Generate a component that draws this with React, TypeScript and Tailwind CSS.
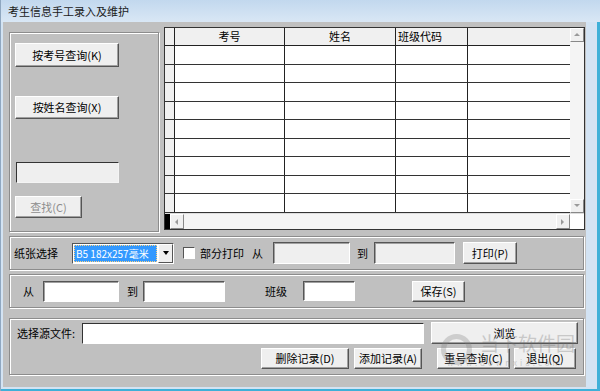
import React from 'react';

const font = { fontFamily: '"Noto Sans CJK SC", "Noto Sans", sans-serif' };

const Btn: React.FC<{ label: string; w: string; h?: string; disabled?: boolean }> = ({ label, w, h = 'h-[22px]', disabled }) => (
  <div
    className={`${w} ${h} shrink-0 flex items-center justify-center bg-[#efefef] border border-t-white border-l-white border-r-[#555] border-b-[#555] shadow-[inset_-1px_-1px_0_#a0a0a0] text-[11px] leading-none whitespace-nowrap ${
      disabled ? 'text-[#8d8d8d]' : 'text-black'
    }`}
  >
    {label}
  </div>
);

const Field: React.FC<{ w: string; h?: string; gray?: boolean }> = ({ w, h = 'h-[21px]', gray }) => (
  <div
    className={`${w} ${h} shrink-0 border border-t-[#555] border-l-[#555] border-r-white border-b-white shadow-[inset_1px_1px_0_#a0a0a0] ${
      gray ? 'bg-[#efefef]' : 'bg-white'
    }`}
  />
);

const Group: React.FC<{ className: string; children?: React.ReactNode }> = ({ className, children }) => (
  <div className={`border border-[#8c8c8c] shadow-[inset_1px_1px_0_#fff,1px_1px_0_#fff] ${className}`}>{children}</div>
);

const Arrow: React.FC<{ dir: 'up' | 'down' | 'left' | 'right' }> = ({ dir }) => {
  const pts = {
    up: '1,5 4,2 7,5',
    down: '1,2 4,5 7,2',
    left: '5,1 2,4 5,7',
    right: '2,1 5,4 2,7',
  }[dir];
  return (
    <svg width="8" height="8" viewBox="0 0 8 8">
      <polygon points={pts} fill="#9a9a9a" />
    </svg>
  );
};

const ScrollBtn: React.FC<{ dir: 'up' | 'down' | 'left' | 'right'; className?: string }> = ({ dir, className = '' }) => (
  <div className={`w-[14px] h-[14px] shrink-0 flex items-center justify-center bg-[#f0f0f0] border border-t-white border-l-white border-r-[#888] border-b-[#888] ${className}`}>
    <Arrow dir={dir} />
  </div>
);

const cols = [
  { w: 'w-[110px]', label: '考号', align: 'justify-center' },
  { w: 'w-[111px]', label: '姓名', align: 'justify-center' },
  { w: 'w-[72px]', label: '班级代码', align: 'justify-start pl-[2px]' },
  { w: 'flex-1', label: '', align: '' },
];

const Grid: React.FC = () => (
  <div className="w-[421px] h-[203px] ml-[5px] mt-[5px] border border-[#333] bg-white flex flex-col shrink-0">
    <div className="flex h-[185px]">
      <div className="flex-1 flex flex-col overflow-hidden">
        <div className="flex h-[18px] bg-[#f0f0f0] border-b border-[#222]">
          <div className="w-[10px] border-r border-[#222]" />
          {cols.map((c, i) => (
            <div key={i} className={`${c.w} flex items-center ${c.align} text-[11px] ${i < 3 ? 'border-r border-[#222]' : ''}`}>
              {c.label}
            </div>
          ))}
        </div>
        {Array.from({ length: 9 }).map((_, r) => (
          <div key={r} className="flex h-[18.5px] border-b border-[#333] shrink-0">
            <div className="w-[10px] bg-[#f0f0f0] border-r border-[#222]" />
            {cols.map((c, i) => (
              <div key={i} className={`${c.w} ${i < 3 ? 'border-r border-[#222]' : ''}`} />
            ))}
          </div>
        ))}
      </div>
      <div className="w-[14px] flex flex-col justify-between bg-[#f4f4f4]">
        <ScrollBtn dir="up" />
        <ScrollBtn dir="down" />
      </div>
    </div>
    <div className="flex h-[16px] border-t border-[#ddd]">
      <div className="w-[5px] bg-black" />
      <ScrollBtn dir="left" className="h-[15px]" />
      <div className="flex-1 bg-[#f4f4f4]" />
      <ScrollBtn dir="right" className="h-[15px]" />
      <div className="w-[14px] bg-white" />
    </div>
  </div>
);

export default function App() {
  return (
    <div className="w-[600px] h-[391px] bg-[#d3e3f3] flex flex-col overflow-hidden relative border-l border-[#8fa7c0]" style={font}>
      <div className="h-[22px] shrink-0 bg-gradient-to-b from-[#c2d8ee] to-[#d9e7f5] flex items-center pl-[7px] text-[11px] text-[#1a1a1a]">
        考生信息手工录入及维护
      </div>
      <div className="flex-1 flex">
        <div className="w-[583px] ml-[2px] mb-[2px] bg-[#c0c0c0] flex flex-col text-[11px] text-black">
          {/* top */}
          <div className="flex items-start">
            <Group className="ml-[6px] mt-[10px] w-[150px] h-[200px] flex flex-col pl-[5px] shrink-0">
              <div className="mt-[10px]">
                <Btn label="按考号查询(K)" w="w-[104px]" h="h-[24px]" />
              </div>
              <div className="mt-[29px]">
                <Btn label="按姓名查询(X)" w="w-[104px]" h="h-[23px]" />
              </div>
              <div className="mt-[43px] ml-[1px]">
                <div className="w-[103px] h-[21px] border border-[#333] border-r-[#f4f4f4] border-b-[#f4f4f4] bg-[#efefef]" />
              </div>
              <div className="mt-[13px]">
                <Btn label="查找(C)" w="w-[67px]" disabled />
              </div>
            </Group>
            <Grid />
          </div>

          {/* paper row */}
          <Group className="ml-[6px] mt-[4px] w-[575px] h-[34px] flex items-center shrink-0">
            <span className="ml-[4px] w-[58px]">纸张选择</span>
            <div className="w-[102px] h-[21px] shrink-0 flex border border-t-[#555] border-l-[#555] border-r-white border-b-white bg-white">
              <div className="flex-1 m-[1px] bg-[#3399ff] text-white text-[10px] flex items-center pl-[2px] outline-1 outline-dotted outline-[#ffd27f] -outline-offset-1 whitespace-nowrap">
                B5 182x257毫米
              </div>
              <div className="w-[15px] bg-[#efefef] border border-t-white border-l-white border-r-[#555] border-b-[#555] flex items-center justify-center">
                <svg width="8" height="6" viewBox="0 0 8 6">
                  <polygon points="1,1 7,1 4,5" fill="#000" />
                </svg>
              </div>
            </div>
            <div className="ml-[9px] w-[12px] h-[12px] bg-white border border-t-[#555] border-l-[#555] border-r-white border-b-white" />
            <span className="ml-[5px]">部分打印</span>
            <span className="ml-[8px]">从</span>
            <div className="ml-[10px]">
              <Field w="w-[77px]" h="h-[22px]" gray />
            </div>
            <span className="ml-[7px]">到</span>
            <div className="ml-[6px]">
              <Field w="w-[81px]" h="h-[22px]" gray />
            </div>
            <div className="ml-[8px]">
              <Btn label="打印(P)" w="w-[54px]" />
            </div>
          </Group>

          {/* range row */}
          <Group className="ml-[6px] mt-[4px] w-[575px] h-[34px] flex items-center shrink-0">
            <span className="ml-[13px]">从</span>
            <div className="ml-[9px]">
              <Field w="w-[76px]" />
            </div>
            <span className="ml-[8px]">到</span>
            <div className="ml-[5px]">
              <Field w="w-[82px]" />
            </div>
            <span className="ml-[40px]">班级</span>
            <div className="ml-[16px]">
              <Field w="w-[52px]" h="h-[20px]" />
            </div>
            <div className="ml-[57px]">
              <Btn label="保存(S)" w="w-[53px]" h="h-[21px]" />
            </div>
          </Group>

          {/* source file */}
          <Group className="ml-[6px] mt-[10px] w-[575px] h-[57px] flex flex-col shrink-0">
            <div className="flex items-center mt-[3px]">
              <span className="ml-[7px] w-[65px]">选择源文件:</span>
              <div className="w-[342px] h-[21px] bg-white border border-t-[#333] border-l-[#333] border-r-white border-b-white" />
              <div className="ml-[7px]">
                <Btn label="浏览" w="w-[147px]" />
              </div>
            </div>
            <div className="flex items-center mt-[4px] ml-[251px]">
              <Btn label="删除记录(D)" w="w-[88px]" h="h-[21px]" />
              <div className="ml-[5px]">
                <Btn label="添加记录(A)" w="w-[68px]" h="h-[21px]" />
              </div>
              <div className="ml-[15px]">
                <Btn label="重号查询(C)" w="w-[73px]" h="h-[21px]" />
              </div>
              <div className="ml-[4px]">
                <Btn label="退出(Q)" w="w-[62px]" h="h-[21px]" />
              </div>
            </div>
          </Group>
        </div>
        <div className="flex-1 border-r-[3px] border-[#3fb0d8]" />
      </div>
      <div className="h-[2px] bg-[#3fb0d8] shrink-0" />

      {/* watermark */}
      <div className="absolute left-[440px] top-[333px] w-[140px] h-[34px] opacity-30 pointer-events-none whitespace-nowrap">
        <div className="absolute left-0 top-[1px] w-[31px] h-[31px] rounded-full border-[5px] border-[#808080]" />
        <span className="absolute left-[39px] top-0 text-[19px] leading-none text-[#707070]">当下软件园</span>
        <span className="absolute left-[6px] top-[26px] text-[8px] leading-none text-[#707070] tracking-[3px]">www.downxia.com</span>
      </div>
    </div>
  );
}
